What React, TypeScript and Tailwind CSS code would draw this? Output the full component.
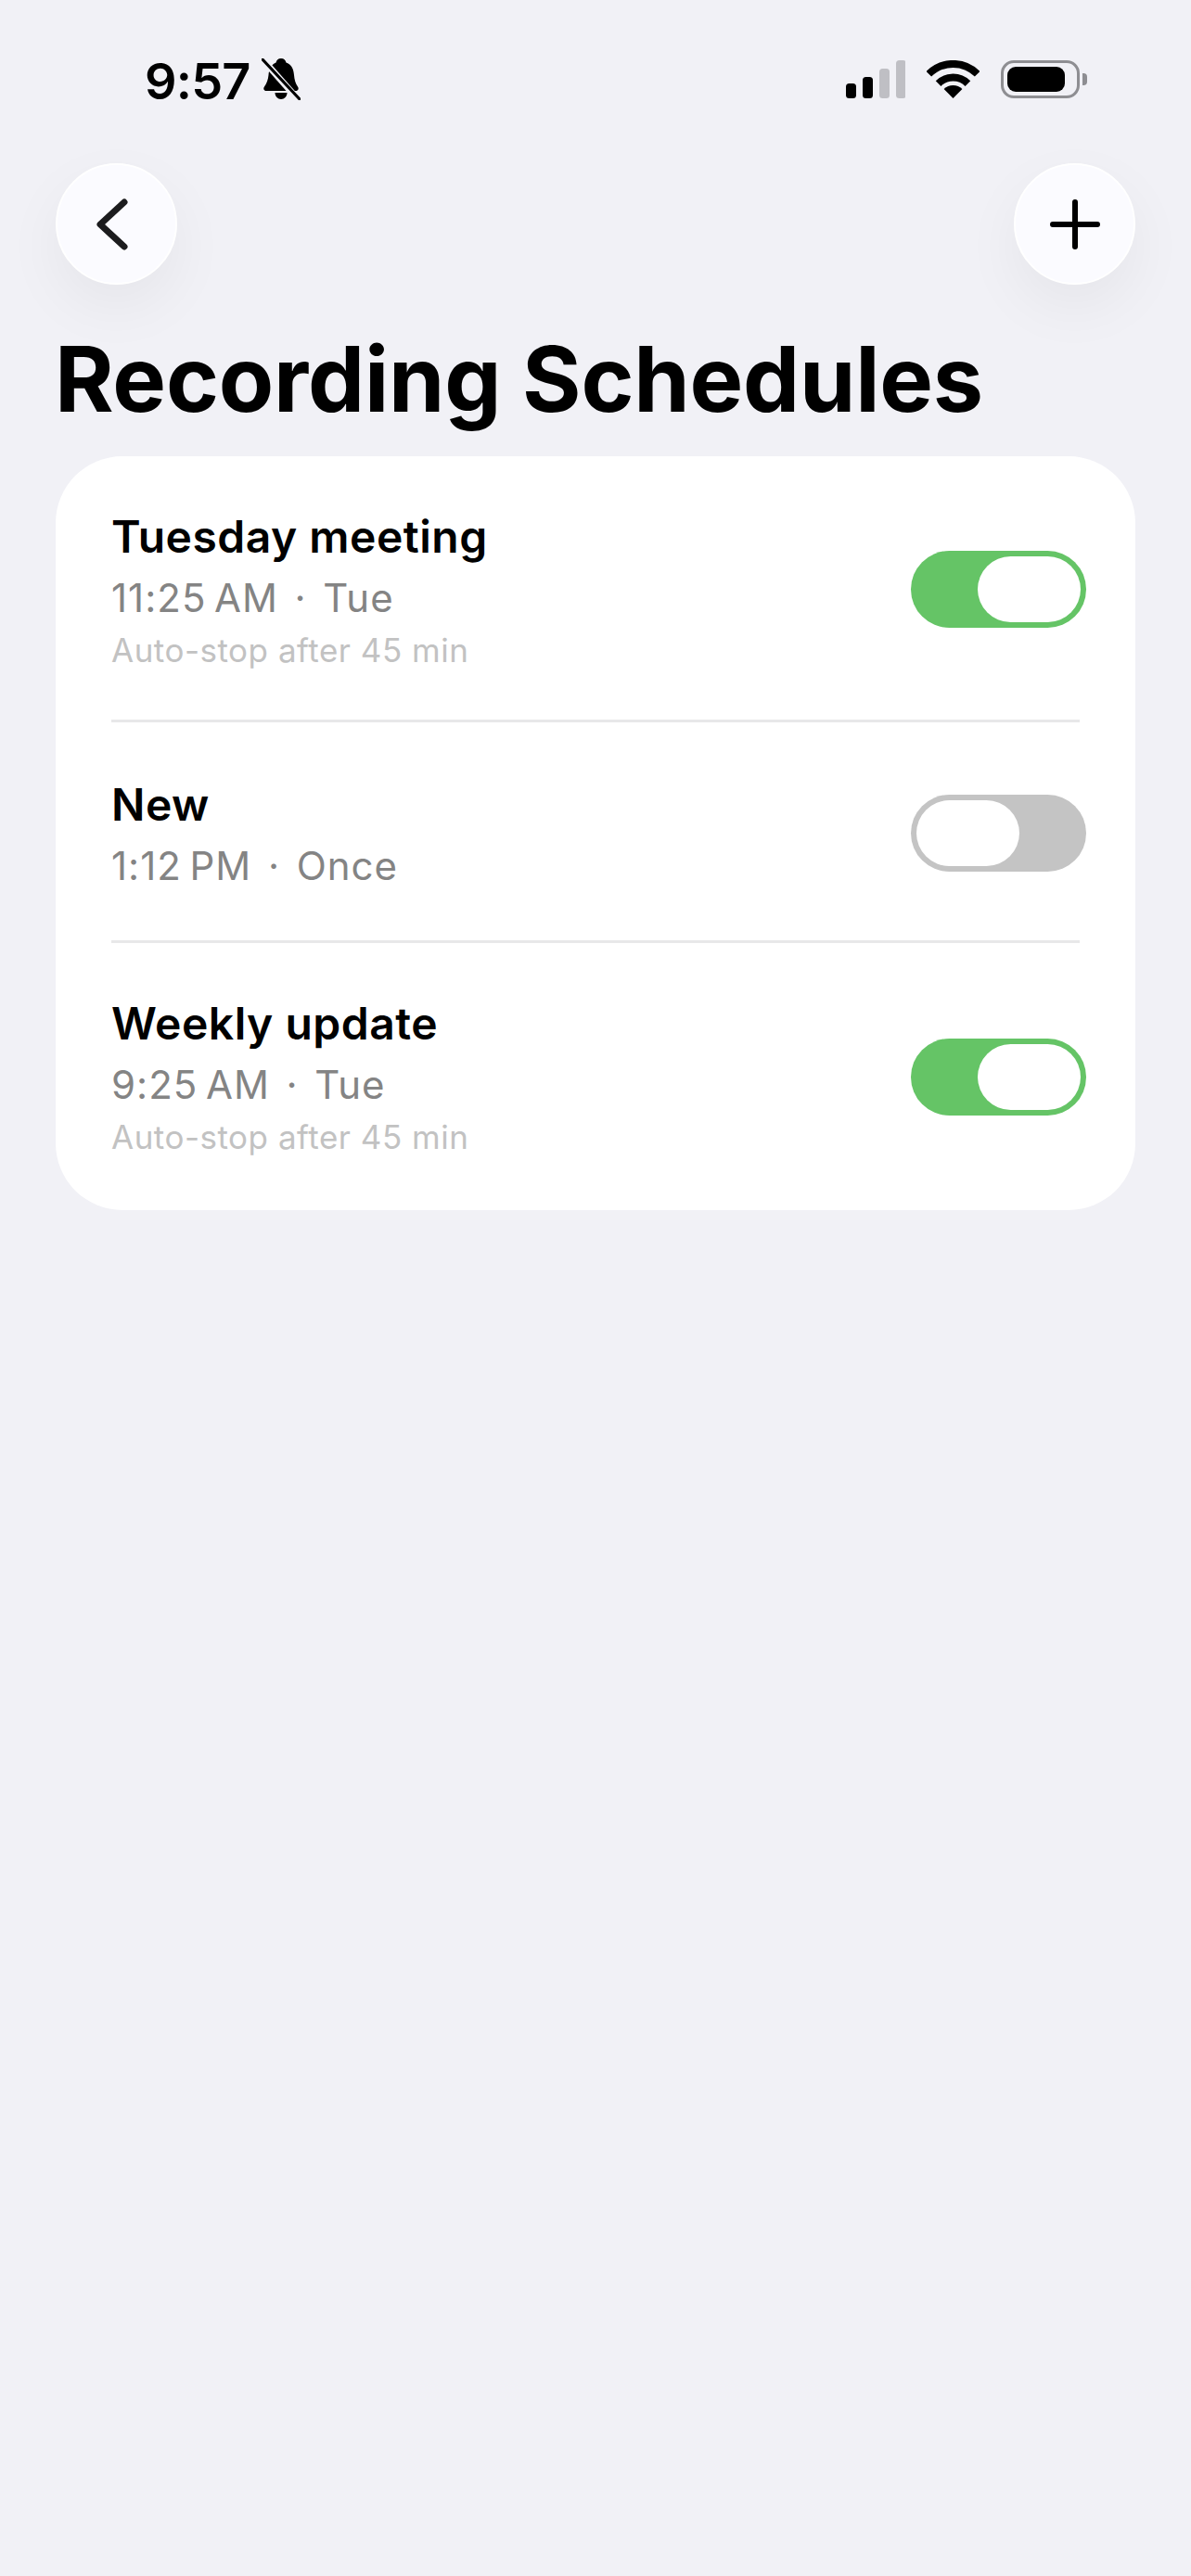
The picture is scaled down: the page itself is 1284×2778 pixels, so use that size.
import React from 'react';

interface Schedule {
  name: string;
  time: string;
  repeat: string;
  note?: string;
  enabled: boolean;
  rowClass: string;
  textClass: string;
}

const schedules: Schedule[] = [
  { name: 'Tuesday meeting', time: '11:25\u2009AM', repeat: 'Tue', note: 'Auto-stop after 45 min', enabled: true, rowClass: 'h-[284px] pt-[3px]', textClass: 'pt-[1px]' },
  { name: 'New', time: '1:12\u2009PM', repeat: 'Once', enabled: false, rowClass: 'h-[235px] pt-[4px]', textClass: 'pt-[5px]' },
  { name: 'Weekly update', time: '9:25\u2009AM', repeat: 'Tue', note: 'Auto-stop after 45 min', enabled: true, rowClass: 'h-[288px]', textClass: '' },
];

function SignalIcon() {
  return (
    <svg width="64" height="41" viewBox="0 0 64 41" className="block">
      <rect x="0" y="25" width="11" height="16" rx="3.5" fill="#000" />
      <rect x="18" y="18" width="11" height="23" rx="3.5" fill="#000" />
      <rect x="36" y="9" width="11" height="32" rx="3.5" fill="#bfbfc4" />
      <rect x="54" y="0" width="11" height="41" rx="3.5" fill="#bfbfc4" />
    </svg>
  );
}

function WifiIcon() {
  return (
    <svg width="57" height="41" viewBox="0 0 57 41" className="block">
      <path d="M2.3 14.8A37 37 0 0 1 54.7 14.8" fill="none" stroke="#000" strokeWidth="8" />
      <path d="M12.6 25.1A22.5 22.5 0 0 1 44.4 25.1" fill="none" stroke="#000" strokeWidth="8" />
      <path d="M28.5 41L18.6 31.1A14 14 0 0 1 38.4 31.1Z" fill="#000" />
    </svg>
  );
}

function BatteryIcon() {
  return (
    <div className="flex items-center">
      <div className="w-[85px] h-[41px] rounded-[14px] border-[3px] border-[#8e8e92] p-[4px]">
        <div className="w-[62px] h-[27px] rounded-[9px] bg-black" />
      </div>
      <div className="ml-[3px] w-[5px] h-[13px] rounded-r-[4px] bg-[#8e8e92]" />
    </div>
  );
}

function MutedBellIcon() {
  return (
    <svg width="42" height="45" viewBox="0 0 42 45" className="block">
      <path
        d="M21 0c3 0 5 2 5.500 4.500C33 7 34.500 12 35 18c.4 5 1.500 9 4 12.500 1.500 2 .5 4.500-2 4.500H5c-2.500 0-3.500-2.500-2-4.500C5.500 27 7 23 7.500 18 8 12 10 7 15.500 4.500 16 2 18 0 21 0Z"
        fill="#000"
      />
      <path d="M14.500 37h13c0 4-3 7-6.500 7s-6.500-3-6.500-7Z" fill="#000" />
      <path d="M2 2L40 45" stroke="#f1f1f6" strokeWidth="7" />
      <path d="M1 1L41 44" stroke="#000" strokeWidth="3" strokeLinecap="round" />
    </svg>
  );
}

function Toggle({ enabled }: { enabled: boolean }) {
  return (
    <div
      className={`flex shrink-0 w-[189px] h-[83px] rounded-full p-[6px] ${
        enabled ? 'justify-end bg-[#65c466]' : 'justify-start bg-[#c4c4c4]'
      }`}
    >
      <div className="w-[111px] h-[71px] rounded-full bg-white" />
    </div>
  );
}

function CircleButton({ children }: { children: React.ReactNode }) {
  return (
    <button className="flex items-center justify-center w-[131px] h-[131px] rounded-full bg-[#fbfbff] border-2 border-white shadow-[0_24px_64px_rgba(0,0,0,0.05)]">
      {children}
    </button>
  );
}

export default function App() {
  return (
    <div className="min-h-screen bg-[#f1f1f6] font-['Inter',sans-serif] text-black">
      {/* Status bar */}
      <div className="flex items-center justify-between pt-[65px] pl-[156px] pr-[112px] h-[106px]">
        <div className="flex items-center gap-[12px]">
          <span className="pt-[3px] text-[54px] leading-[41px] font-semibold tracking-[-0.8px]">9:57</span>
          <MutedBellIcon />
        </div>
        <div className="flex items-center gap-[23px]">
          <SignalIcon />
          <WifiIcon />
          <BatteryIcon />
        </div>
      </div>

      {/* Nav buttons */}
      <div className="flex items-center justify-between px-[60px] mt-[70px]">
        <CircleButton>
          <svg width="40" height="60" viewBox="0 0 40 60" className="-ml-[9px]">
            <path d="M33 6L7 30L33 54" fill="none" stroke="#1c1c1e" strokeWidth="7" strokeLinecap="round" strokeLinejoin="round" />
          </svg>
        </CircleButton>
        <CircleButton>
          <svg width="54" height="54" viewBox="0 0 54 54">
            <path d="M27 3V51M3 27H51" fill="none" stroke="#000" strokeWidth="6" strokeLinecap="round" />
          </svg>
        </CircleButton>
      </div>

      <h1 className="pl-[59px] mt-[43px] text-[97px] leading-[118px] font-bold tracking-[-0.2px]">Recording Schedules</h1>

      {/* Schedule list */}
      <div className="mx-[60px] mt-[24px] rounded-[72px] bg-white px-[60px]">
        {schedules.map((item, idx) => (
          <div key={item.name} className={idx > 0 ? 'border-t-[3px] border-[#e8e8e9]' : ''}>
            <div className={`flex items-center justify-between ${item.rowClass}`}>
              <div className={item.textClass}>
                <div className="text-[48px] leading-[60px] font-semibold tracking-[0.5px]">{item.name}</div>
                <div className="mt-[6px] text-[42px] leading-[60px] text-[#848484] whitespace-pre tracking-[1px] [word-spacing:-4px]">
                  {item.time}
                  {'  ·  '}
                  {item.repeat}
                </div>
                {item.note && (
                  <div className="mt-[3px] text-[35px] leading-[46px] text-[#c2c2c2] tracking-[0.5px]">{item.note}</div>
                )}
              </div>
              <div className="-mr-[7px]">
                <Toggle enabled={item.enabled} />
              </div>
            </div>
          </div>
        ))}
      </div>
    </div>
  );
}
